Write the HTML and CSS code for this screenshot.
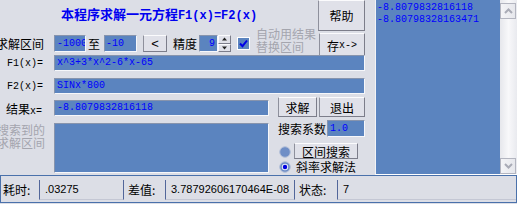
FILE: index.html
```html
<!DOCTYPE html>
<html lang="zh">
<head>
<meta charset="utf-8">
<title>一元方程求解</title>
<link rel="stylesheet" href="styles.css">
</head>
<body>
<div class="app">
  <div class="main">
    <div class="left">
      <div class="top">
        <div class="topl">
          <div class="title">本程序求解一元方程<span class="tmono">F1(x)=F2(x)</span></div>
          <div class="params">
            <span class="lbl lbl-range">求解区间</span>
            <div class="field f-from">-1000</div>
            <span class="lbl zhi">至</span>
            <div class="field f-to">-10</div>
            <button class="btn b-lt">&lt;</button>
            <span class="lbl jd">精度</span>
            <div class="field f-spin">9</div>
            <div class="spin">
              <span class="sp"><svg width="7" height="4" viewBox="0 0 7 4"><path d="M3.5 0.5 L6 3.5 H1 Z" fill="#222"/></svg></span>
              <span class="sp"><svg width="7" height="4" viewBox="0 0 7 4"><path d="M1 0.5 H6 L3.5 3.5 Z" fill="#222"/></svg></span>
            </div>
            <span class="check"><svg width="13" height="13" viewBox="0 0 13 13"><rect x="0.5" y="0.5" width="12" height="12" fill="#5b84bf" stroke="#ffffff"/><path d="M3 6.5 L5.5 9.2 L10 3.5" fill="none" stroke="#0000e6" stroke-width="2"/></svg></span>
            <span class="auto">自动用结果<br>替换区间</span>
          </div>
        </div>
        <div class="topr">
          <button class="btn b-help">帮助</button>
          <button class="btn b-save">存<span class="bmono">x-&gt;</span></button>
        </div>
      </div>
      <div class="frow f1row">
        <span class="flbl">F1(x)=</span>
        <div class="field wide">x^3+3*x^2-6*x-65</div>
      </div>
      <div class="frow f2row">
        <span class="flbl">F2(x)=</span>
        <div class="field wide">SINx*800</div>
      </div>
      <div class="bottom">
        <div class="bleft">
          <div class="frow rrow">
            <span class="rlbl">结果<span class="bmono">x=</span></span>
            <div class="field mid">-8.8079832816118</div>
          </div>
          <div class="srow">
            <span class="slbl">搜索到的<br>求解区间</span>
            <div class="field big"></div>
          </div>
        </div>
        <div class="bright">
          <div class="brow">
            <button class="btn b-solve">求解</button>
            <button class="btn b-exit">退出</button>
          </div>
          <div class="crow">
            <span class="lbl clbl">搜索系数</span>
            <div class="field f-coef">1.0</div>
          </div>
          <div class="rad r1">
            <span class="radio"><svg width="12" height="12" viewBox="0 0 12 12"><circle cx="6" cy="6" r="5.3" fill="#6f8ec6" stroke="#b3bfd8"/></svg></span>
            <button class="btn b-range">区间搜索</button>
          </div>
          <div class="rad r2">
            <span class="radio"><svg width="12" height="12" viewBox="0 0 12 12"><circle cx="6" cy="6" r="5.3" fill="#6f8ec6" stroke="#b3bfd8"/><circle cx="6" cy="6" r="3.2" fill="#e6eaf4"/><circle cx="6" cy="6" r="2.2" fill="#0000e0"/></svg></span>
            <span class="lbl rlab">斜率求解法</span>
          </div>
        </div>
      </div>
    </div>
    <div class="list">
      <div class="list-body">
        <div>-8.8079832816118</div>
        <div>-8.80798328163471</div>
      </div>
      <div class="sbar">
        <span class="sbtn"><svg width="9" height="6" viewBox="0 0 9 6"><path d="M1 5 L4.5 1.5 L8 5" fill="none" stroke="#a9abb6" stroke-width="2"/></svg></span>
        <span class="sbtn"><svg width="9" height="6" viewBox="0 0 9 6"><path d="M1 1 L4.5 4.5 L8 1" fill="none" stroke="#a9abb6" stroke-width="2"/></svg></span>
      </div>
    </div>
  </div>
  <div class="status">
    <span class="slabel s1">耗时:</span>
    <span class="panel p1">.03275</span>
    <span class="slabel s2">差值:</span>
    <span class="panel p2">3.78792606170464E-08</span>
    <span class="slabel s3">状态:</span>
    <span class="panel p3">7</span>
  </div>
</div>
</body>
</html>
```
FILE: styles.css
```css
* { box-sizing: border-box; margin: 0; padding: 0; }
html, body { width: 517px; height: 204px; overflow: hidden; }
body {
  background: #dcdee6;
  font-family: "Noto Sans CJK SC", sans-serif;
  font-size: 12px;
  color: #000;
}
.app { width: 517px; height: 204px; display: flex; flex-direction: column; }
.main { display: flex; height: 175px; }
.left { width: 375px; display: flex; flex-direction: column; }

.top { display: flex; height: 55px; }
.topl { width: 318px; }
.title {
  height: 31px;
  line-height: 28px;
  text-align: center;
  color: #0000f0;
  font-weight: bold;
  font-size: 13px;
}
.tmono { font-family: "Liberation Mono", monospace; font-size: 12px; }
.bmono { font-family: "Liberation Mono", monospace; font-size: 10px; }

.params { height: 25px; display: flex; align-items: center; }
.lbl { line-height: 14px; white-space: nowrap; }
.lbl-range { margin-left: -4px; width: 48px; margin-right: 10px; }

.field {
  background: #5b84bf;
  border: 1px solid;
  border-color: #8794ad #f6f7fa #f6f7fa #8794ad;
  color: #0000ff;
  font-family: "Liberation Mono", monospace;
  font-size: 10px;
  height: 17px;
  line-height: 15px;
  padding: 0 2px;
  overflow: hidden;
  white-space: nowrap;
}
.f-from { width: 32px; padding-left: 2px; }
.zhi { margin-left: 2px; width: 12px; margin-right: 4px; }
.f-to { width: 33px; padding-left: 1px; }
.btn {
  font: inherit;
  color: #000;
  background: #e0e1e9;
  border: 1px solid;
  border-color: #fbfbfd #7c7d8a #7c7d8a #8e909c;
  padding: 0;
  display: flex;
  align-items: center;
  justify-content: center;
}
.b-lt { margin-left: 6px; width: 24px; height: 17px; font-family: "Liberation Sans", sans-serif; font-size: 13px; }
.jd { margin-left: 6px; width: 24px; margin-right: 2px; }
.f-spin { width: 19px; text-align: right; padding-right: 2px; }
.spin { width: 13px; height: 17px; display: flex; flex-direction: column; }
.sp {
  flex: 1;
  background: #e0e1e9;
  border: 1px solid;
  border-color: #fbfbfd #7c7d8a #7c7d8a #fbfbfd;
  display: flex;
  align-items: center;
  justify-content: center;
}
.check { margin-left: 6px; width: 13px; height: 13px; display: flex; }
.auto {
  margin-left: 6px;
  align-self: flex-start;
  margin-top: -3px;
  color: #a4a5ae;
  line-height: 12.5px;
  white-space: nowrap;
}

.topr { width: 47px; display: flex; flex-direction: column; align-self: flex-start; }
.b-help { height: 31px; width: 47px; }
.b-save { height: 24px; width: 46px; margin-left: 1px; margin-top: 2px; }

.frow { display: flex; align-items: center; height: 16px; }
.f2row { margin-top: 7px; }
.flbl {
  width: 54px;
  padding-left: 7px;
  font-family: "Liberation Mono", monospace;
  font-size: 10px;
}
.field.wide { width: 311px; height: 16px; line-height: 14px; }

.bottom { display: flex; height: 81px; }
.bleft { width: 278px; }
.rrow { margin-top: 6px; }
.rlbl { width: 54px; padding-left: 6px; white-space: nowrap; }
.field.mid { width: 215px; height: 16px; line-height: 14px; }
.srow { display: flex; margin-top: 7px; height: 50px; }
.slbl {
  margin-left: -3px;
  width: 57px;
  color: #a4a5ae;
  line-height: 13px;
  white-space: nowrap;
}
.field.big { width: 215px; height: 50px; }

.bright { width: 87px; display: flex; flex-direction: column; }
.brow { display: flex; margin-top: 3px; height: 20px; }
.b-solve { width: 39px; height: 20px; }
.b-exit { width: 46px; height: 20px; margin-left: 2px; }
.crow { display: flex; align-items: center; margin-top: 3px; height: 17px; }
.clbl { width: 48px; }
.f-coef { width: 38px; margin-left: 1px; }
.rad { display: flex; height: 16px; }
.r1 { margin-top: 6px; align-items: flex-end; }
.r2 { align-items: center; }
.radio { width: 12px; height: 12px; margin-left: 1px; display: flex; }
.r1 .radio { margin-bottom: 1px; }
.b-range { margin-left: 3px; width: 64px; height: 16px; }
.rlab { margin-left: 5px; }

.list {
  width: 142px;
  height: 175px;
  display: flex;
  border-left: 1px solid #f2f3f6;
  border-bottom: 1px solid #ffffff;
}
.list-body {
  width: 124px;
  background: #5b84bf;
  padding: 2px 0 0 1px;
  font-family: "Liberation Mono", monospace;
  font-size: 10px;
  line-height: 12px;
  color: #0000ff;
  white-space: nowrap;
  overflow: hidden;
}
.sbar {
  width: 17px;
  background: linear-gradient(to right, #e6e7ec, #f8f8fa 50%, #e9eaef);
  display: flex;
  flex-direction: column;
  justify-content: space-between;
  padding: 3px 0 0 0;
}
.sbtn {
  width: 16px;
  height: 16px;
  background: linear-gradient(to right, #f4f4f7, #e6e7ec);
  border: 1px solid #b3b5c0;
  display: flex;
  align-items: center;
  justify-content: center;
}

.status {
  height: 28px;
  border: 1px solid #4a71ab;
  display: flex;
  align-items: center;
  font-size: 12px;
  padding-top: 2px;
}
.slabel { white-space: nowrap; line-height: 14px; }
.s1 { padding-left: 2px; width: 38px; }
.s2 { width: 41px; padding-left: 4px; }
.s3 { width: 42px; padding-left: 4px; }
.panel {
  height: 20px;
  line-height: 18px;
  border-left: 1px solid #52669a;
  border-right: 1px solid #52669a;
  border-bottom: 1px solid #c4c7d4;
  padding-left: 5px;
  font-family: "Liberation Sans", sans-serif;
  font-size: 11px;
  white-space: nowrap;
}
.p1 { width: 85px; }
.p2 { width: 130px; }
.p3 { flex: 1; border-right: none; }
```
